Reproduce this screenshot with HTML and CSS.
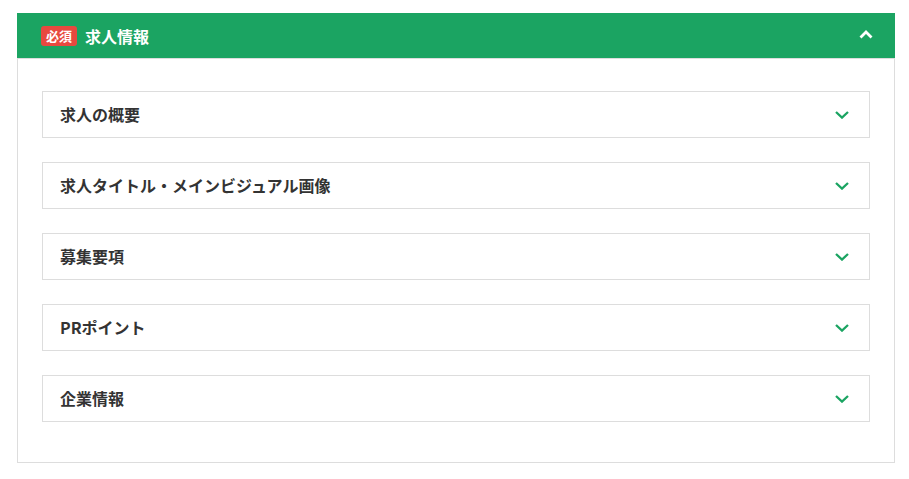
FILE: index.html
```html
<!DOCTYPE html>
<html lang="ja">
<head>
    <meta charset="UTF-8">
    <meta name="viewport" content="width=device-width, initial-scale=1.0">
    <title>求人情報</title>
    <link rel="stylesheet" href="styles.css">
</head>
<body>
    <section class="panel">
        <header class="panel-header">
            <span class="badge">必須</span>
            <h2 class="panel-title">求人情報</h2>
            <svg class="chevron chevron-up" width="14" height="9" viewBox="0 0 14 9">
                <path d="M1.5 7.5 L7 2 L12.5 7.5" fill="none" stroke="#fff" stroke-width="2.8"/>
            </svg>
        </header>

        <div class="panel-body">
            <div class="item">
                <span class="item-title">求人の概要</span>
                <svg class="chevron" width="14" height="8" viewBox="0 0 14 8">
                    <path d="M1 1 L7 6.6 L13 1" fill="none" stroke="#1ba462" stroke-width="2.3"/>
                </svg>
            </div>
            <div class="item">
                <span class="item-title">求人タイトル・メインビジュアル画像</span>
                <svg class="chevron" width="14" height="8" viewBox="0 0 14 8">
                    <path d="M1 1 L7 6.6 L13 1" fill="none" stroke="#1ba462" stroke-width="2.3"/>
                </svg>
            </div>
            <div class="item">
                <span class="item-title">募集要項</span>
                <svg class="chevron" width="14" height="8" viewBox="0 0 14 8">
                    <path d="M1 1 L7 6.6 L13 1" fill="none" stroke="#1ba462" stroke-width="2.3"/>
                </svg>
            </div>
            <div class="item">
                <span class="item-title">PRポイント</span>
                <svg class="chevron" width="14" height="8" viewBox="0 0 14 8">
                    <path d="M1 1 L7 6.6 L13 1" fill="none" stroke="#1ba462" stroke-width="2.3"/>
                </svg>
            </div>
            <div class="item">
                <span class="item-title">企業情報</span>
                <svg class="chevron" width="14" height="8" viewBox="0 0 14 8">
                    <path d="M1 1 L7 6.6 L13 1" fill="none" stroke="#1ba462" stroke-width="2.3"/>
                </svg>
            </div>
        </div>
    </section>
</body>
</html>
```

FILE: styles.css
```css
:root {
    --green: #1ba462;
    --red: #e8493f;
    --border: #dddddd;
    --text: #333333;
}

* {
    margin: 0;
    padding: 0;
    box-sizing: border-box;
}

body {
    font-family: "Noto Sans CJK JP", "Noto Sans", sans-serif;
    color: var(--text);
    background: #fff;
    padding: 13px 14px 0 17px;
}

.panel {
    width: 878px;
}

.panel-header {
    display: flex;
    align-items: center;
    height: 45px;
    padding: 0 22px 0 24px;
    background: var(--green);
}

.badge {
    display: inline-flex;
    align-items: center;
    justify-content: center;
    width: 36px;
    height: 20px;
    border-radius: 3px;
    background: var(--red);
    color: #fff;
    font-size: 13px;
    font-weight: 700;
    line-height: 1;
}

.panel-title {
    margin-left: 8px;
    color: #fff;
    font-size: 16px;
    font-weight: 700;
    line-height: 1;
}

.chevron {
    display: block;
    margin-left: auto;
}

.chevron-up {
    margin-top: -2px;
}

.panel-body {
    display: flex;
    flex-direction: column;
    gap: 24px;
    padding: 32px 24px 40px;
    border: 1px solid var(--border);
}

.item {
    display: flex;
    align-items: center;
    height: 47px;
    padding: 0 20px 0 17px;
    border: 1px solid var(--border);
}

.item-title {
    font-size: 16px;
    font-weight: 700;
    line-height: 1;
    margin-top: -1px;
}
```
